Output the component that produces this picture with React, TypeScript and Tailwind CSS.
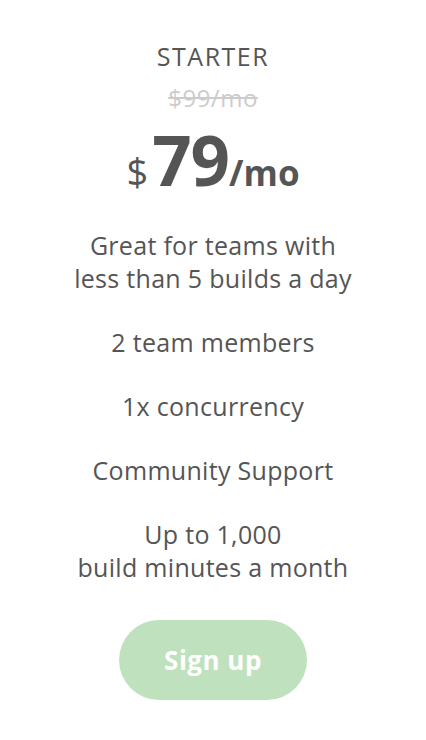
import React from 'react';

const features: string[][] = [
    ['Great for teams with', 'less than 5 builds a day'],
    ['2 team members'],
    ['1x concurrency'],
    ['Community Support'],
    ['Up to 1,000', 'build minutes a month'],
];

const App: React.FC = () => {
    return (
        <div className="w-[426px] h-[740px] bg-white flex flex-col items-center text-[#555555] font-['Open_Sans',sans-serif]">
            <div className="mt-[39px] text-[25px] leading-[34px] tracking-[1.5px]">STARTER</div>
            <div className="mt-[10px] text-[24px] leading-[30px] tracking-[0.5px] text-[#cccccc] line-through">$99/mo</div>
            <div className="mt-[12px] flex items-baseline leading-none">
                <span className="text-[38px] mr-[4px]">$</span>
                <span className="text-[69px] font-bold tracking-[-1px]">79</span>
                <span className="text-[35px] font-bold">/mo</span>
            </div>
            <div className="mt-[35px] flex flex-col items-center gap-[31px]">
                {features.map((lines, i) => (
                    <p key={i} className="text-[25px] leading-[33px] tracking-[0.3px] text-center">
                        {lines.map((l, j) => (
                            <span key={j} className="block">{l}</span>
                        ))}
                    </p>
                ))}
            </div>
            <button className="mt-[36px] w-[188px] h-[80px] rounded-full bg-[#bfe1be] text-white text-[26px] font-bold tracking-[0.5px]">
                Sign up
            </button>
        </div>
    );
};

export default App;
